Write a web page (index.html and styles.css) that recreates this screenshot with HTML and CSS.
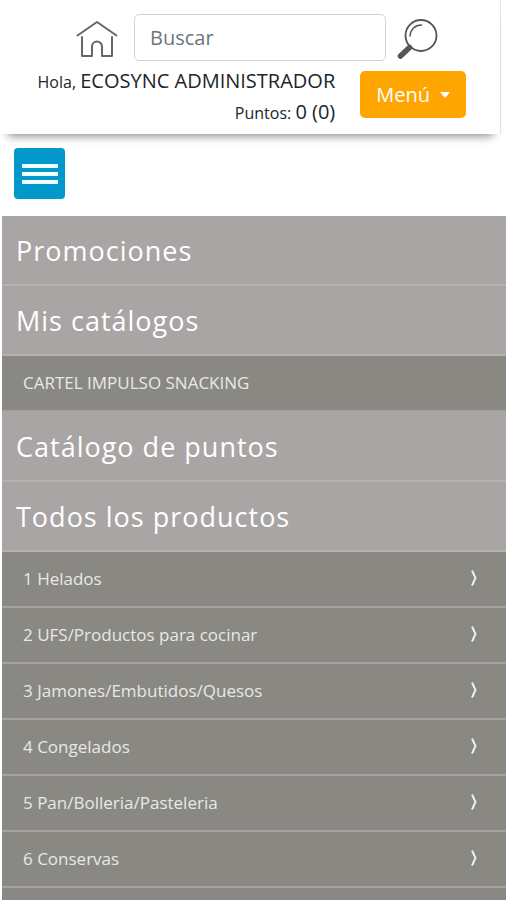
FILE: index.html
```html
<!DOCTYPE html>
<html lang="es">
<head>
<meta charset="utf-8">
<meta name="viewport" content="width=device-width, initial-scale=1">
<title>Catálogo</title>
<link rel="stylesheet" href="styles.css">
</head>
<body>
<header class="header">
  <form class="search">
    <a class="icon-link" href="#" aria-label="Inicio">
      <svg class="icon" viewBox="0 0 42 42" fill="none" stroke="#666" stroke-width="2" stroke-linecap="round" stroke-linejoin="round">
        <path d="M1.500 18.500 21 5 40.500 18.500"/>
        <path d="M6 20V39H16V29.500A5 5 0 0 1 26 29.500V39H36V20"/>
      </svg>
    </a>
    <input class="search-input" type="search" placeholder="Buscar" aria-label="Buscar">
    <button class="icon-link" type="submit" aria-label="Buscar">
      <svg class="icon" viewBox="0 0 42 42" fill="none" stroke="#555" stroke-linecap="round">
        <circle cx="25" cy="18.500" r="15.500" stroke-width="1.800"/>
        <path d="M14 19C14.500 12.500 19 8 25.500 8" stroke-width="1.500"/>
        <path d="M13.500 30.500 4.500 39" stroke-width="5.500"/>
      </svg>
    </button>
  </form>
  <div class="account">
    <div class="greeting">
      <p class="line">Hola, <span class="value">ECOSYNC ADMINISTRADOR</span></p>
      <p class="line">Puntos: <span class="value">0 (0)</span></p>
    </div>
    <button class="menu-button" type="button">Menú <span class="caret"></span></button>
  </div>
</header>
<button class="toggle" type="button" aria-label="Abrir catálogo">
  <span class="bar"></span><span class="bar"></span><span class="bar"></span>
</button>
<nav class="nav">
  <a class="section" href="#">Promociones</a>
  <a class="section" href="#">Mis catálogos</a>
  <a class="item" href="#">CARTEL IMPULSO SNACKING</a>
  <a class="section" href="#">Catálogo de puntos</a>
  <a class="section" href="#">Todos los productos</a>
  <a class="item" href="#">1 Helados <svg class="chevron" viewBox="0 0 6 16"><path d="M1 0.500 4.500 8 1 15.500"/></svg></a>
  <a class="item" href="#">2 UFS/Productos para cocinar <svg class="chevron" viewBox="0 0 6 16"><path d="M1 0.500 4.500 8 1 15.500"/></svg></a>
  <a class="item" href="#">3 Jamones/Embutidos/Quesos <svg class="chevron" viewBox="0 0 6 16"><path d="M1 0.500 4.500 8 1 15.500"/></svg></a>
  <a class="item" href="#">4 Congelados <svg class="chevron" viewBox="0 0 6 16"><path d="M1 0.500 4.500 8 1 15.500"/></svg></a>
  <a class="item" href="#">5 Pan/Bolleria/Pasteleria <svg class="chevron" viewBox="0 0 6 16"><path d="M1 0.500 4.500 8 1 15.500"/></svg></a>
  <a class="item" href="#">6 Conservas <svg class="chevron" viewBox="0 0 6 16"><path d="M1 0.500 4.500 8 1 15.500"/></svg></a>
  <div class="rest"></div>
</nav>
</body>
</html>
```
FILE: styles.css
```css
* {
  box-sizing: border-box;
}

body {
  display: flex;
  flex-direction: column;
  min-height: 100vh;
  margin: 0;
  background: #fff;
  color: #212529;
  font-family: "Open Sans", sans-serif;
}

.header {
  margin-right: 6px;
  padding: 14px 34px 6px;
  border-right: 1px solid #e4e4e4;
  box-shadow: 0 10px 9px -8px #888;
}

.search {
  display: flex;
  align-items: center;
  gap: 10px;
  padding: 0 28px 0 42px;
}

.icon-link {
  display: flex;
  flex: none;
  padding: 0;
  border: 0;
  background: none;
}

.icon {
  width: 42px;
  height: 42px;
}

.search-input {
  flex: 1;
  min-width: 0;
  height: 47px;
  margin-left: 6px;
  padding: 0 15px;
  border: 1px solid #ced4da;
  border-radius: 5px;
  font: 20px "Open Sans", sans-serif;
}

.search-input::placeholder {
  color: #6c757d;
}

.account {
  display: flex;
  justify-content: flex-end;
  align-items: flex-start;
  gap: 25px;
  padding-top: 5px;
}

.greeting {
  text-align: right;
}

.line {
  margin: 0;
  font-size: 16px;
  line-height: 29px;
}

.value {
  font-size: 20px;
}

.menu-button {
  display: flex;
  align-items: center;
  gap: 10px;
  height: 47px;
  margin-top: 5px;
  padding: 0 16px;
  border: 0;
  border-radius: 5px;
  background: #ffa500;
  color: #fff;
  font: 20px "Open Sans", sans-serif;
}

.caret {
  border: 5px solid transparent;
  border-top: 6px solid #fff;
  border-bottom: 0;
}

.toggle {
  display: flex;
  flex: none;
  flex-direction: column;
  align-items: center;
  justify-content: center;
  gap: 4px;
  width: 51px;
  height: 51px;
  margin: 14px 14px 17px;
  padding: 0;
  border: 0;
  border-radius: 4px;
  background: #0398cb;
}

.bar {
  width: 36px;
  height: 4px;
  background: #f2ffff;
}

.nav {
  display: flex;
  flex: 1;
  flex-direction: column;
  margin: 0 1px 0 2px;
}

.section,
.item {
  display: flex;
  flex: none;
  align-items: center;
  border-bottom: 2px solid #b5b2b0;
  text-decoration: none;
}

.section {
  height: 70px;
  padding: 0 14px;
  background: #a9a5a4;
  color: #fff;
  font-size: 27px;
  letter-spacing: 1px;
}

.item {
  justify-content: space-between;
  height: 56px;
  padding: 0 29px 2px 21px;
  border-color: #a3a29f;
  background: #898883;
  color: #e8e8e6;
  font-size: 17px;
}

.chevron {
  width: 6px;
  height: 16px;
  fill: none;
  stroke: #eee;
  stroke-width: 2;
}

.rest {
  flex: 1;
  background: #898883;
}
```
